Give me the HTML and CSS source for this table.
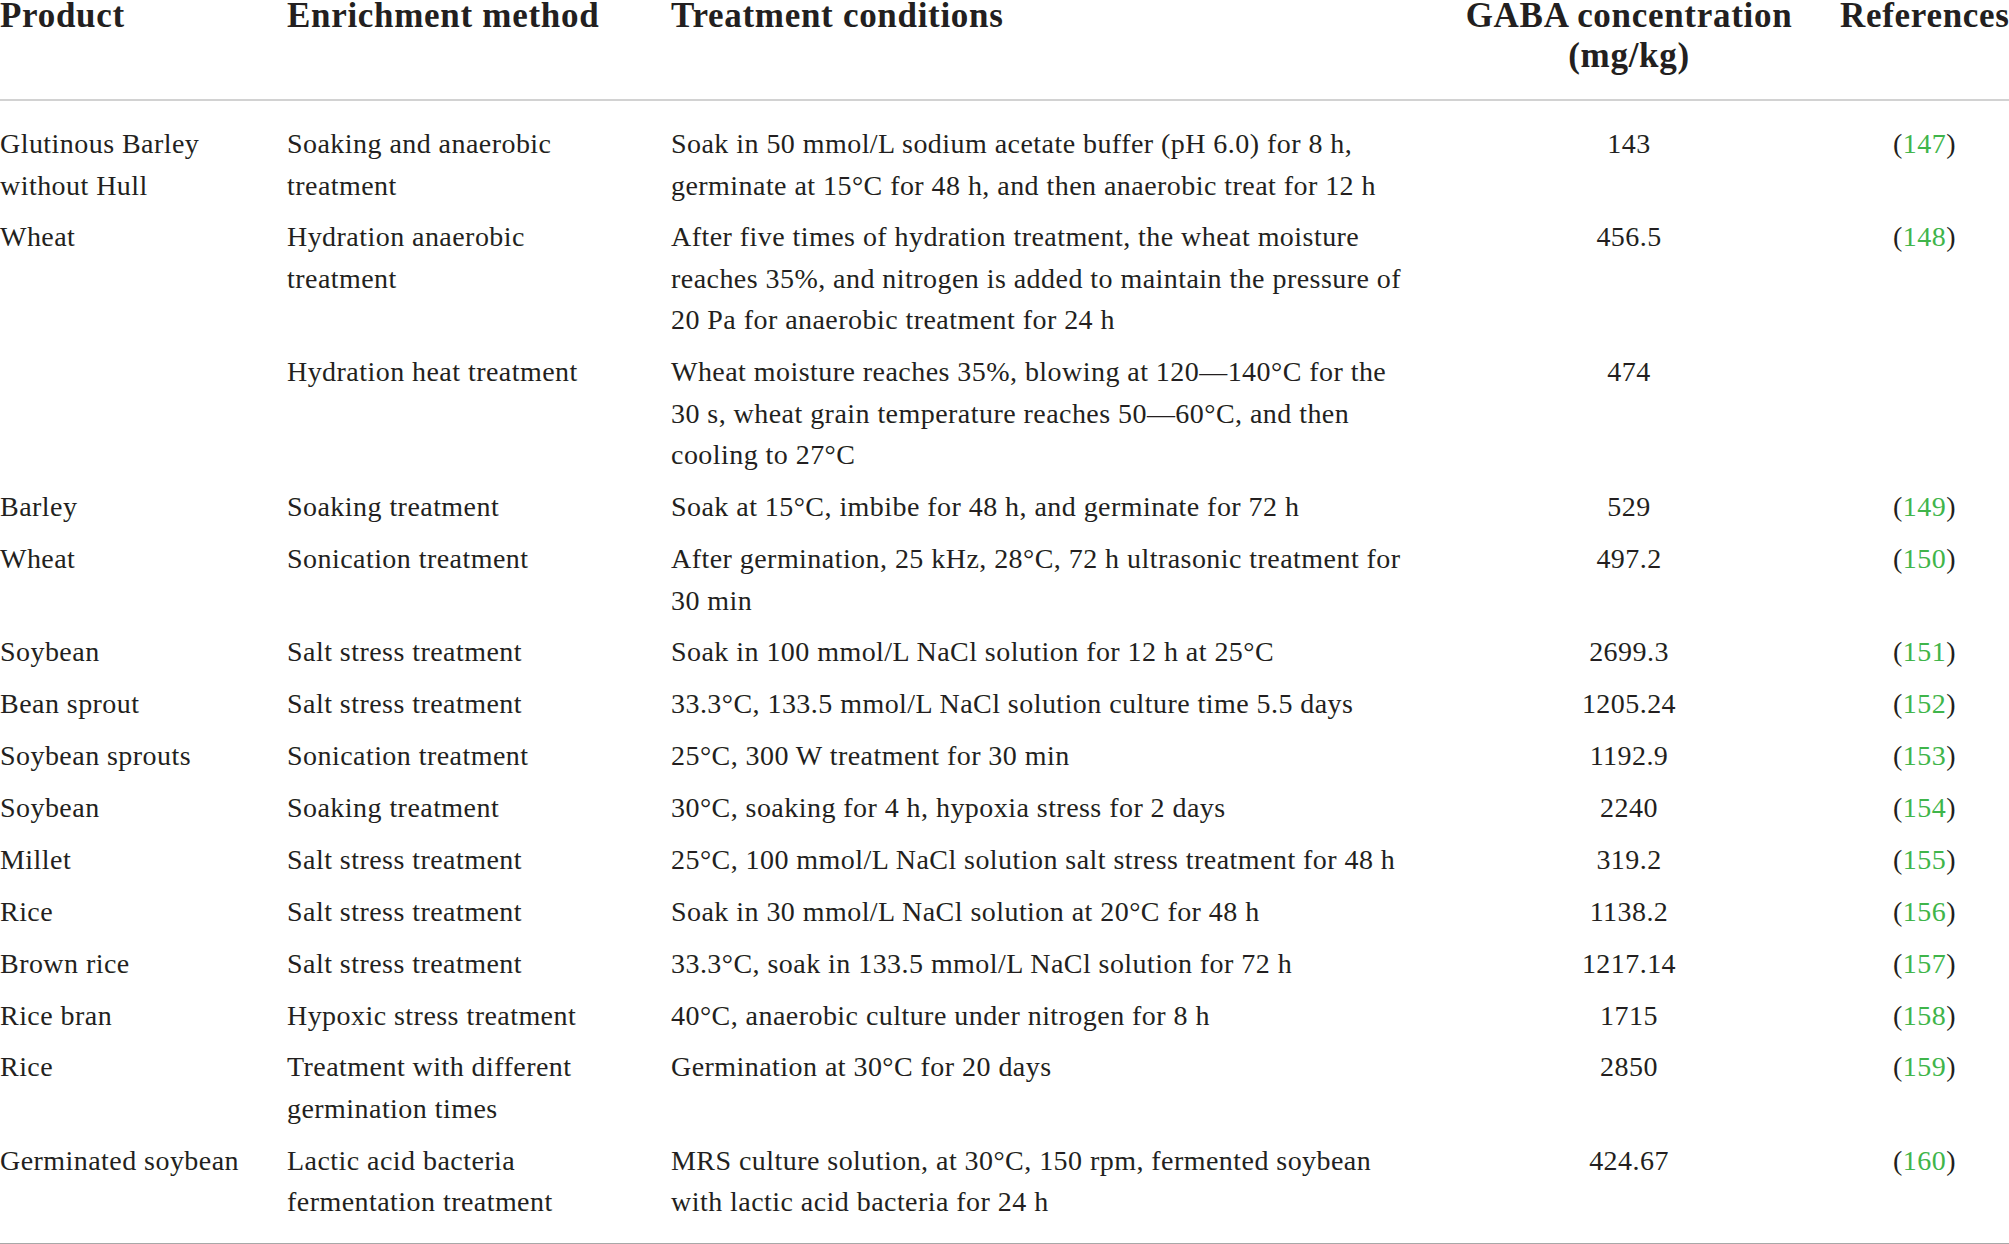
FILE: index.html
```html
<!DOCTYPE html>
<html lang="en">
<head>
<meta charset="utf-8">
<title>GABA enrichment methods</title>
<link rel="stylesheet" href="styles.css">
</head>
<body>
<table class="gaba-table">
  <colgroup>
    <col class="c-product">
    <col class="c-method">
    <col class="c-cond">
    <col class="c-gaba">
    <col class="c-ref">
  </colgroup>
  <thead>
    <tr>
      <th>Product</th>
      <th>Enrichment method</th>
      <th>Treatment conditions</th>
      <th class="center">GABA concentration<br>(mg/kg)</th>
      <th class="center">References</th>
    </tr>
  </thead>
  <tbody>
    <tr>
      <td>Glutinous Barley<br>without Hull</td>
      <td>Soaking and anaerobic<br>treatment</td>
      <td>Soak in 50 mmol/L sodium acetate buffer (pH 6.0) for 8 h,<br>germinate at 15°C for 48 h, and then anaerobic treat for 12 h</td>
      <td class="center">143</td>
      <td class="center">(<a class="ref">147</a>)</td>
    </tr>
    <tr>
      <td>Wheat</td>
      <td>Hydration anaerobic<br>treatment</td>
      <td>After five times of hydration treatment, the wheat moisture<br>reaches 35%, and nitrogen is added to maintain the pressure of<br>20 Pa for anaerobic treatment for 24 h</td>
      <td class="center">456.5</td>
      <td class="center">(<a class="ref">148</a>)</td>
    </tr>
    <tr>
      <td></td>
      <td>Hydration heat treatment</td>
      <td>Wheat moisture reaches 35%, blowing at 120—140°C for the<br>30 s, wheat grain temperature reaches 50—60°C, and then<br>cooling to 27°C</td>
      <td class="center">474</td>
      <td class="center"></td>
    </tr>
    <tr>
      <td>Barley</td>
      <td>Soaking treatment</td>
      <td>Soak at 15°C, imbibe for 48 h, and germinate for 72 h</td>
      <td class="center">529</td>
      <td class="center">(<a class="ref">149</a>)</td>
    </tr>
    <tr>
      <td>Wheat</td>
      <td>Sonication treatment</td>
      <td>After germination, 25 kHz, 28°C, 72 h ultrasonic treatment for<br>30 min</td>
      <td class="center">497.2</td>
      <td class="center">(<a class="ref">150</a>)</td>
    </tr>
    <tr>
      <td>Soybean</td>
      <td>Salt stress treatment</td>
      <td>Soak in 100 mmol/L NaCl solution for 12 h at 25°C</td>
      <td class="center">2699.3</td>
      <td class="center">(<a class="ref">151</a>)</td>
    </tr>
    <tr>
      <td>Bean sprout</td>
      <td>Salt stress treatment</td>
      <td>33.3°C, 133.5 mmol/L NaCl solution culture time 5.5 days</td>
      <td class="center">1205.24</td>
      <td class="center">(<a class="ref">152</a>)</td>
    </tr>
    <tr>
      <td>Soybean sprouts</td>
      <td>Sonication treatment</td>
      <td>25°C, 300 W treatment for 30 min</td>
      <td class="center">1192.9</td>
      <td class="center">(<a class="ref">153</a>)</td>
    </tr>
    <tr>
      <td>Soybean</td>
      <td>Soaking treatment</td>
      <td>30°C, soaking for 4 h, hypoxia stress for 2 days</td>
      <td class="center">2240</td>
      <td class="center">(<a class="ref">154</a>)</td>
    </tr>
    <tr>
      <td>Millet</td>
      <td>Salt stress treatment</td>
      <td>25°C, 100 mmol/L NaCl solution salt stress treatment for 48 h</td>
      <td class="center">319.2</td>
      <td class="center">(<a class="ref">155</a>)</td>
    </tr>
    <tr>
      <td>Rice</td>
      <td>Salt stress treatment</td>
      <td>Soak in 30 mmol/L NaCl solution at 20°C for 48 h</td>
      <td class="center">1138.2</td>
      <td class="center">(<a class="ref">156</a>)</td>
    </tr>
    <tr>
      <td>Brown rice</td>
      <td>Salt stress treatment</td>
      <td>33.3°C, soak in 133.5 mmol/L NaCl solution for 72 h</td>
      <td class="center">1217.14</td>
      <td class="center">(<a class="ref">157</a>)</td>
    </tr>
    <tr>
      <td>Rice bran</td>
      <td>Hypoxic stress treatment</td>
      <td>40°C, anaerobic culture under nitrogen for 8 h</td>
      <td class="center">1715</td>
      <td class="center">(<a class="ref">158</a>)</td>
    </tr>
    <tr>
      <td>Rice</td>
      <td>Treatment with different<br>germination times</td>
      <td>Germination at 30°C for 20 days</td>
      <td class="center">2850</td>
      <td class="center">(<a class="ref">159</a>)</td>
    </tr>
    <tr>
      <td>Germinated soybean</td>
      <td>Lactic acid bacteria<br>fermentation treatment</td>
      <td>MRS culture solution, at 30°C, 150 rpm, fermented soybean<br>with lactic acid bacteria for 24 h</td>
      <td class="center">424.67</td>
      <td class="center">(<a class="ref">160</a>)</td>
    </tr>
  </tbody>
</table>
</body>
</html>
```

FILE: styles.css
```css
html, body {
  margin: 0;
  padding: 0;
  background: #ffffff;
  overflow: hidden;
}

body {
  font-family: "Liberation Serif", "DejaVu Serif", serif;
  color: #231f20;
}

.gaba-table {
  width: 2009px;
  table-layout: fixed;
  border-collapse: separate;
  border-spacing: 0;
  margin-top: -4px;
}

.c-product { width: 287px; }
.c-method { width: 384px; }
.c-cond { width: 747px; }
.c-gaba { width: 422px; }
.c-ref { width: 169px; }

.gaba-table th {
  font-size: 35px;
  font-weight: bold;
  letter-spacing: 0.7px;
  line-height: 39.5px;
  text-align: left;
  vertical-align: top;
  padding: 0 0 24px 0;
  border-bottom: 2px solid #d2d2d2;
  white-space: nowrap;
}

.gaba-table td {
  font-size: 28px;
  letter-spacing: 0.45px;
  line-height: 41.5px;
  vertical-align: top;
  padding: 5.2px 0;
  white-space: nowrap;
}

.gaba-table tbody tr:first-child td {
  padding-top: 22px;
}

.gaba-table tbody tr:last-child td {
  padding-bottom: 20.5px;
  border-bottom: 2px solid #a8a8a8;
}

.gaba-table .center {
  text-align: center;
}

.ref {
  color: #3fb54a;
  text-decoration: none;
}
```
